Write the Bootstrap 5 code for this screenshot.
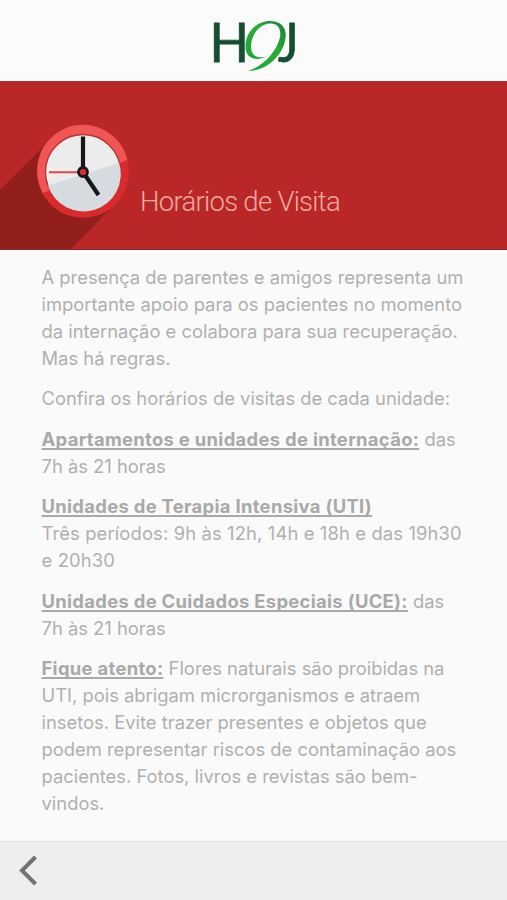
<!DOCTYPE html>
<html lang="pt-BR">
<head>
<meta charset="utf-8">
<meta name="viewport" content="width=device-width, initial-scale=1">
<title>Horários de Visita</title>
<link href="https://cdn.jsdelivr.net/npm/bootstrap@5.3.0/dist/css/bootstrap.min.css" rel="stylesheet">
<style>
body{background:#fafafa;font-family:Inter,"Liberation Sans",sans-serif;color:#b0b0b0;height:900px;overflow:hidden}
.brand-bar{height:81px;background:#fbfbfb}
.hero{height:169px;background:#b92826;border-top:1px solid #ad3433;border-bottom:1px solid #8b2a29}
.hero h1{font:300 27.5px/34px Roboto,sans-serif;letter-spacing:-.72px;color:#f5a9a0;margin:103px 0 0 11px;white-space:nowrap}
.copy{padding:14px 30px 0 41.5px;font-size:18.4px;line-height:27px;letter-spacing:-.01px}
.copy p{margin:0 0 13.45px;white-space:nowrap}
.copy strong{font-weight:700;color:#a9a9a9;text-decoration:underline;text-decoration-thickness:1.5px;text-underline-offset:2px;text-decoration-skip-ink:none;letter-spacing:.32px}
.copy .hours{letter-spacing:.13px}
.bottom-bar{height:59px;background:#efedee;border-top:1px solid #e1dfe0}
.back{line-height:0;padding:0 0 2px 17px}
</style>
<script src="https://cdn.jsdelivr.net/npm/bootstrap@5.3.0/dist/js/bootstrap.bundle.min.js"></script>
</head>
<body class="d-flex flex-column">
<header class="brand-bar d-flex justify-content-center flex-shrink-0">
<svg width="110" height="81" viewBox="199 0 110 81" role="img" aria-label="H9J">
<defs><linearGradient id="leaf" x1="0" y1="1" x2="1" y2="0"><stop offset="0" stop-color="#19a637"/><stop offset=".6" stop-color="#28ad36"/><stop offset="1" stop-color="#14803a"/></linearGradient></defs>
<g font-family="Lato,sans-serif" font-weight="400" fill="#174d31" stroke="#174d31" stroke-width=".8" font-size="54"><text x="209.500" y="62" textLength="39.500" lengthAdjust="spacingAndGlyphs">H</text><text x="278" y="62" textLength="20.500" lengthAdjust="spacingAndGlyphs">J</text></g>
<path fill="url(#leaf)" d="M267 56.500C255 62 245.500 58 245.500 46.500C245.500 32 257 21 270 21C281 21 287 28 285.500 38C283.500 55 267 71 248 71C262 67 277 52 280 37C281.500 28 277 23 270 23.500C259 24 250.500 36 251 47C251.500 56 257 59 267 56.500Z"/>
</svg>
</header>
<section class="hero d-flex flex-shrink-0">
<svg class="flex-shrink-0" width="129" height="167" viewBox="0 82 129 167" aria-hidden="true">
<path fill="#931f1d" d="M0 190L51 139L115 204L71 249H0Z"/>
<circle cx="83" cy="172" r="45.800" fill="#d92a2d"/>
<path fill="#f05656" d="M43 193A45.800 45.800 0 1 1 127.500 160Z"/>
<circle cx="83" cy="172" r="37.500" fill="#ececec" stroke="#b93236" stroke-width="1.300"/>
<path fill="#d5dbdf" d="M48 185.500L119 163A37 37 0 0 1 48 185.500Z"/>
<path d="M83 172V136.500M83 172L98.500 195" stroke="#151719" stroke-width="4.200"/>
<path d="M49 172.200H83" stroke="#dc4a4e" stroke-width="2"/>
<circle cx="83" cy="172" r="4.500" fill="#d83035" stroke="#1b1718" stroke-width="2.800"/>
</svg>
<h1>Horários de Visita</h1>
</section>
<main class="copy flex-grow-1">
<p>A presença de parentes e amigos representa um<br>importante apoio para os pacientes no momento<br>da internação e colabora para sua recuperação.<br>Mas há regras.</p>
<p>Confira os horários de visitas de cada unidade:</p>
<p><strong>Apartamentos e unidades de internação:</strong> das<br>7h às 21 horas</p>
<p class="hours"><strong>Unidades de Terapia Intensiva (UTI)</strong><br>Três períodos: 9h às 12h, 14h e 18h e das 19h30<br>e 20h30</p>
<p><strong>Unidades de Cuidados Especiais (UCE):</strong> das<br>7h às 21 horas</p>
<p><strong>Fique atento:</strong> Flores naturais são proibidas na<br>UTI, pois abrigam microrganismos e atraem<br>insetos. Evite trazer presentes e objetos que<br>podem representar riscos de contaminação aos<br>pacientes. Fotos, livros e revistas são bem-<br>vindos.</p>
</main>
<nav class="bottom-bar d-flex align-items-center flex-shrink-0">
<a href="#" class="back" aria-label="Voltar"><svg width="24" height="32" viewBox="0 0 24 32" fill="none" stroke="#747273" stroke-width="4"><path d="M18.500 3L5 16.500L18.500 30"/></svg></a>
</nav>
</body>
</html>
